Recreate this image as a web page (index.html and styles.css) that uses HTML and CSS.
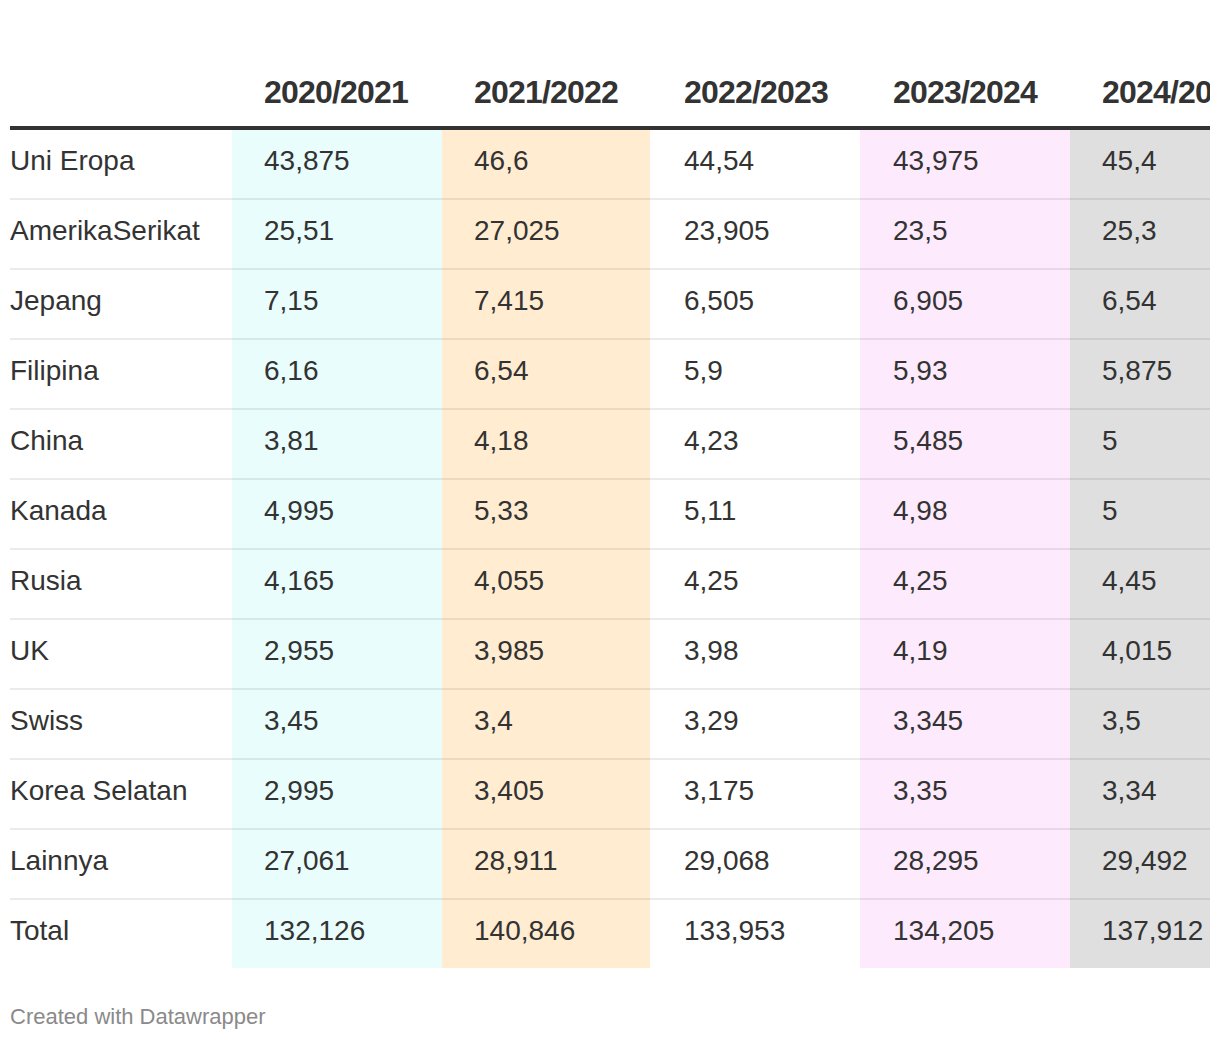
FILE: index.html
```html
<!DOCTYPE html>
<html lang="id">
<head>
<meta charset="utf-8">
<title>Tabel</title>
<link rel="stylesheet" href="styles.css">
</head>
<body>
<div class="chart">
  <div class="table-wrap">
    <table class="data">
      <colgroup>
        <col class="c0"><col class="c1"><col class="c2"><col class="c3"><col class="c4"><col class="c5">
      </colgroup>
      <thead>
        <tr><th></th><th>2020/2021</th><th>2021/2022</th><th>2022/2023</th><th>2023/2024</th><th>2024/2025</th></tr>
      </thead>
      <tbody>
        <tr><td>Uni Eropa</td><td class="cy">43,875</td><td class="pe">46,6</td><td>44,54</td><td class="pi">43,975</td><td class="gr">45,4</td></tr>
        <tr><td>AmerikaSerikat</td><td class="cy">25,51</td><td class="pe">27,025</td><td>23,905</td><td class="pi">23,5</td><td class="gr">25,3</td></tr>
        <tr><td>Jepang</td><td class="cy">7,15</td><td class="pe">7,415</td><td>6,505</td><td class="pi">6,905</td><td class="gr">6,54</td></tr>
        <tr><td>Filipina</td><td class="cy">6,16</td><td class="pe">6,54</td><td>5,9</td><td class="pi">5,93</td><td class="gr">5,875</td></tr>
        <tr><td>China</td><td class="cy">3,81</td><td class="pe">4,18</td><td>4,23</td><td class="pi">5,485</td><td class="gr">5</td></tr>
        <tr><td>Kanada</td><td class="cy">4,995</td><td class="pe">5,33</td><td>5,11</td><td class="pi">4,98</td><td class="gr">5</td></tr>
        <tr><td>Rusia</td><td class="cy">4,165</td><td class="pe">4,055</td><td>4,25</td><td class="pi">4,25</td><td class="gr">4,45</td></tr>
        <tr><td>UK</td><td class="cy">2,955</td><td class="pe">3,985</td><td>3,98</td><td class="pi">4,19</td><td class="gr">4,015</td></tr>
        <tr><td>Swiss</td><td class="cy">3,45</td><td class="pe">3,4</td><td>3,29</td><td class="pi">3,345</td><td class="gr">3,5</td></tr>
        <tr><td>Korea Selatan</td><td class="cy">2,995</td><td class="pe">3,405</td><td>3,175</td><td class="pi">3,35</td><td class="gr">3,34</td></tr>
        <tr><td>Lainnya</td><td class="cy">27,061</td><td class="pe">28,911</td><td>29,068</td><td class="pi">28,295</td><td class="gr">29,492</td></tr>
        <tr><td>Total</td><td class="cy">132,126</td><td class="pe">140,846</td><td>133,953</td><td class="pi">134,205</td><td class="gr">137,912</td></tr>
      </tbody>
    </table>
  </div>
  <div class="footer">Created with Datawrapper</div>
</div>
</body>
</html>
```
FILE: styles.css
```css
html, body {
  margin: 0;
  padding: 0;
  background: #ffffff;
}

body {
  font-family: "Liberation Sans", Arial, Helvetica, sans-serif;
  color: #333333;
}

.chart {
  padding: 0 10px;
}

.table-wrap {
  width: 1200px;
  overflow: hidden;
}

.data {
  border-collapse: separate;
  border-spacing: 0;
  table-layout: fixed;
  width: 1230px;
}

.c0 { width: 222px; }
.c1 { width: 210px; }
.c2 { width: 208px; }
.c3 { width: 210px; }
.c4 { width: 210px; }
.c5 { width: 170px; }

.data th {
  font-size: 32px;
  font-weight: bold;
  letter-spacing: -0.8px;
  line-height: 36px;
  text-align: left;
  white-space: nowrap;
  padding: 74px 0 16px 32px;
  border-bottom: 4px solid #333333;
  color: #333333;
}

.data th:first-child {
  padding-left: 0;
}

.data td {
  font-size: 28px;
  line-height: 32px;
  padding: 15px 0 21px 32px;
  border-bottom: 2px solid rgba(0, 0, 0, 0.08);
  white-space: nowrap;
  overflow: hidden;
}

.data td:first-child {
  padding-left: 0;
}

.data th:nth-child(4),
.data td:nth-child(4) {
  padding-left: 34px;
}

.data th:nth-child(5),
.data td:nth-child(5) {
  padding-left: 33px;
}

.data tbody tr:last-child td {
  border-bottom: 0;
}

.data td.cy { background: #e8fdfc; }
.data td.pe { background: #ffecd1; }
.data td.pi { background: #fdeafd; }
.data td.gr { background: #dfdfdf; }

.footer {
  margin-top: 36px;
  font-size: 22px;
  line-height: 26px;
  color: #8a8a8a;
}
```
